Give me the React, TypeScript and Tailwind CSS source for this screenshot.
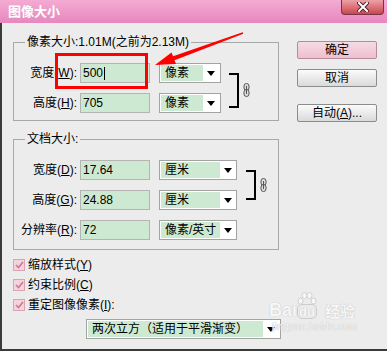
import React from "react"

const font = "font-['Liberation_Sans','Noto_Sans_CJK_SC',sans-serif]"

const Caret = () => (
    <svg width="8" height="5" viewBox="0 0 8 5">
        <polygon points="0,0 8,0 4,5" fill="#000" />
    </svg>
)

const Select = ({ text, w, green }: { text: string; w: string; green: string }) => (
    <div className={`flex h-[20px] ${w} border border-[#a3a3a3] bg-white p-px`}>
        <div className={`flex h-full ${green} items-center bg-[#cde9d1] pl-[4px] text-[12px] leading-none`}>
            {text}
        </div>
        <div className="flex flex-1 items-center justify-center">
            <Caret />
        </div>
    </div>
)

const Field = ({ value, cursor }: { value: string; cursor?: boolean }) => (
    <div className="flex h-[20px] w-[70px] items-center border border-[#b4b4b4] bg-[#cde9d1] pl-[2px] text-[12px] leading-none">
        {value}
        {cursor && <span className="ml-px h-[13px] w-px bg-black" />}
    </div>
)

const Label = ({ pre, k, post = "):" }: { pre: string; k: string; post?: string }) => (
    <div className="w-[66px] shrink-0 pr-[3px] text-right text-[12px] leading-none whitespace-nowrap">
        {pre}(<span className="underline">{k}</span>{post}
    </div>
)

const Chain = () => (
    <svg width="8" height="14" viewBox="0 0 8 14">
        <rect x="1" y="0.5" width="5" height="7" rx="2.5" fill="#ddd" stroke="#555" />
        <rect x="1" y="6.5" width="5" height="7" rx="2.5" fill="#ddd" stroke="#555" />
        <line x1="3.5" y1="3" x2="3.5" y2="11" stroke="#555" />
    </svg>
)

const Check = ({ pre, k, post = ")" }: { pre: string; k: string; post?: string }) => (
    <div className="flex h-[20px] items-center">
        <div className="flex h-[12px] w-[12px] items-center justify-center border border-[#dba3b3] bg-[#f3d4dd]">
            <svg width="9" height="8" viewBox="0 0 9 8">
                <polyline points="1,4 3.5,6.5 8,1" fill="none" stroke="#c77a93" strokeWidth="1.6" />
            </svg>
        </div>
        <span className="ml-[3px] text-[12px] leading-none">
            {pre}(<span className="underline">{k}</span>{post}
        </span>
    </div>
)

const Button = ({ children, primary }: { children: React.ReactNode; primary?: boolean }) => (
    <div
        className={`flex h-[18px] w-[80px] items-center justify-center rounded-[2px] border text-[12px] leading-none ${
            primary
                ? "border-[#b98a99] bg-gradient-to-b from-[#f7dbe4] to-[#eebfcf]"
                : "border-[#8c8c8c] bg-gradient-to-b from-[#fbfbfb] to-[#dadada]"
        }`}
    >
        {children}
    </div>
)

export default function App() {
    return (
        <div className={`relative flex h-[351px] w-[387px] flex-col overflow-hidden bg-[#ececec] text-black ${font}`}>
            {/* title bar */}
            <div className="flex h-[23px] shrink-0 items-start justify-between bg-gradient-to-b from-[#f3abd3] to-[#e687be]">
                <span className="mt-[5px] ml-[8px] text-[13px] leading-none font-bold text-white">图像大小</span>
                <div className="mr-[3px] flex h-[15px] w-[43px] items-center justify-center rounded-b-[4px] border border-t-0 border-[#7a3344] bg-gradient-to-b from-[#eda0a6] to-[#c9434f]">
                    <svg width="12" height="10" viewBox="0 0 12 10">
                        <path d="M2 1 L10 9 M10 1 L2 9" stroke="#4a2030" strokeWidth="4" strokeLinecap="square" />
                        <path d="M2 1 L10 9 M10 1 L2 9" stroke="#fff" strokeWidth="2" strokeLinecap="square" />
                    </svg>
                </div>
            </div>

            {/* body */}
            <div className="flex flex-1 items-start border-b-2 border-l-2 border-[#3a3a3a] pt-[11px] pl-[11px]">
                <div className="flex w-[266px] flex-col">
                    <fieldset className="border border-[#a8a8a8] pt-[13px] pb-[7px]">
                        <legend className="ml-[11px] px-[2px] text-[12px] leading-[16px]">像素大小:1.01M(之前为2.13M)</legend>
                        <div className="flex items-center">
                            <div className="flex flex-col gap-[10px]">
                                <div className="flex items-center">
                                    <Label pre="宽度" k="W" />
                                    <Field value="500" cursor />
                                    <div className="ml-[9px]">
                                        <Select text="像素" w="w-[62px]" green="w-[42px]" />
                                    </div>
                                </div>
                                <div className="flex items-center">
                                    <Label pre="高度" k="H" />
                                    <Field value="705" />
                                    <div className="ml-[9px]">
                                        <Select text="像素" w="w-[62px]" green="w-[42px]" />
                                    </div>
                                </div>
                            </div>
                            <div className="mt-[4px] ml-[8px] h-[35px] w-[10px] border-y-2 border-r-2 border-black" />
                            <div className="mt-[4px] ml-[4px]">
                                <Chain />
                            </div>
                        </div>
                    </fieldset>

                    <fieldset className="mt-[10px] border border-[#a8a8a8] pt-[13px] pb-[9px]">
                        <legend className="ml-[11px] px-[2px] text-[12px] leading-[16px]">文档大小:</legend>
                        <div className="flex flex-col gap-[10px]">
                            <div className="flex items-center">
                                <div className="flex flex-col gap-[10px]">
                                    <div className="flex items-center">
                                        <Label pre="宽度" k="D" />
                                        <Field value="17.64" />
                                        <div className="ml-[9px]">
                                            <Select text="厘米" w="w-[78px]" green="w-[59px]" />
                                        </div>
                                    </div>
                                    <div className="flex items-center">
                                        <Label pre="高度" k="G" />
                                        <Field value="24.88" />
                                        <div className="ml-[9px]">
                                            <Select text="厘米" w="w-[78px]" green="w-[59px]" />
                                        </div>
                                    </div>
                                </div>
                                <div className="ml-[9px] h-[30px] w-[10px] border-y-2 border-r-2 border-black" />
                                <div className="ml-[4px]">
                                    <Chain />
                                </div>
                            </div>
                            <div className="flex items-center">
                                <Label pre="分辨率" k="R" />
                                <Field value="72" />
                                <div className="ml-[9px]">
                                    <Select text="像素/英寸" w="w-[78px]" green="w-[59px]" />
                                </div>
                            </div>
                        </div>
                    </fieldset>

                    <div className="mt-[5px] flex flex-col">
                        <Check pre="缩放样式" k="Y" />
                        <Check pre="约束比例" k="C" />
                        <Check pre="重定图像像素" k="I" post="):" />
                    </div>

                    <div className="mt-[4px] ml-[73px] w-[195px]">
                        <Select text="两次立方（适用于平滑渐变）" w="w-[195px]" green="w-[175px]" />
                    </div>
                </div>

                <div className="mt-[7px] ml-[18px] flex flex-col">
                    <Button primary>确定</Button>
                    <div className="mt-[10px]">
                        <Button>取消</Button>
                    </div>
                    <div className="mt-[17px]">
                        <Button>
                            自动(<span className="underline">A</span>)...
                        </Button>
                    </div>
                </div>
            </div>

            {/* annotation overlay */}
            <div className="absolute top-[53px] left-[55px] h-[36px] w-[93px] border-[3px] border-[#ff0000]" />
            <svg className="absolute top-0 left-0" width="387" height="351" viewBox="0 0 387 351">
                <polygon
                    points="155,65 176,64 174.5,60.2 243.3,33.8 242.7,32.2 173.1,56.3 171.5,52.4"
                    fill="#ff0000"
                />
            </svg>

            {/* watermark */}
            <div className="absolute top-[292px] left-[269px] flex flex-col items-start leading-none text-[#f7f7f7] [text-shadow:0_0_1px_#c4c4c4,0_0_1px_#c4c4c4]">
                <div className="flex items-end">
                    <span className="text-[18px] font-bold">Bai</span>
                    <div className="flex flex-col items-center">
                        <svg width="20" height="14" viewBox="0 0 20 14">
                            <g fill="#f7f7f7" stroke="#c8c8c8" strokeWidth="0.8">
                                <ellipse cx="3.5" cy="9" rx="2.5" ry="3" />
                                <ellipse cx="7.5" cy="3.5" rx="2.5" ry="3" />
                                <ellipse cx="12.5" cy="3.5" rx="2.5" ry="3" />
                                <ellipse cx="16.5" cy="9" rx="2.5" ry="3" />
                            </g>
                        </svg>
                        <span className="-mt-[2px] rounded-[5px] border border-[#cccccc] px-px text-[13px] font-bold">du</span>
                    </div>
                    <span className="ml-[8px] text-[15px] font-bold">经验</span>
                </div>
                <span className="mt-[3px] ml-[3px] text-[10px] tracking-[0.3px]">jingyan.baidu.com</span>
            </div>
        </div>
    )
}
